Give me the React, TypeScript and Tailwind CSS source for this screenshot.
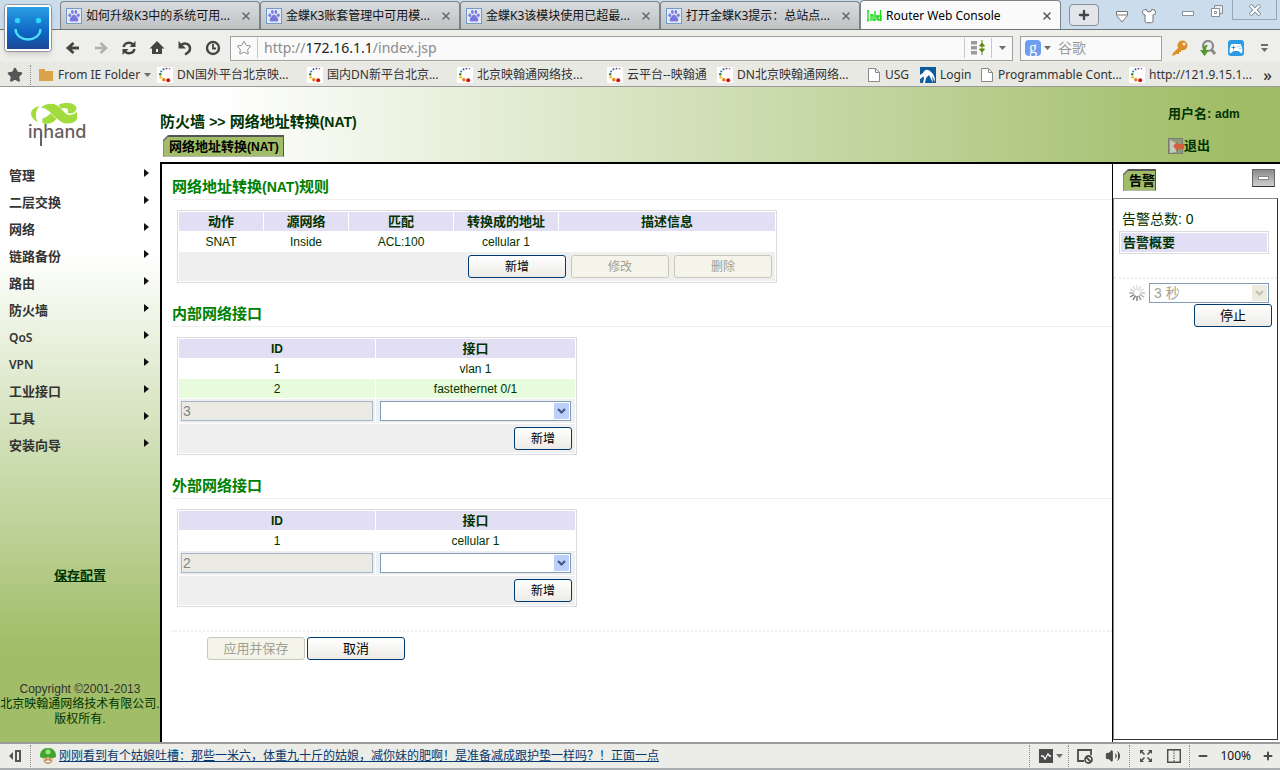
import React from 'react';
import { Star, X, Plus, Minus, Volume2, Shirt } from 'lucide-react';

const uiFont = 'font-["Noto_Sans","Noto_Sans_CJK_SC",sans-serif]';
const pageFont = 'font-["Liberation_Sans","Noto_Sans_CJK_SC",sans-serif]';

const tabs = [
  '如何升级K3中的系统可用...',
  '金蝶K3账套管理中可用模...',
  '金蝶K3该模块使用已超最...',
  '打开金蝶K3提示：总站点...',
];

const bookmarks = [
  { icon: 'dots', label: 'DN国外平台北京映...', width: 'w-[150px]' },
  { icon: 'dots', label: '国内DN新平台北京...', width: 'w-[150px]' },
  { icon: 'dots', label: '北京映翰通网络技...', width: 'w-[150px]' },
  { icon: 'dots', label: '云平台--映翰通', width: 'w-[110px]' },
  { icon: 'dots', label: 'DN北京映翰通网络...', width: 'w-[150px]' },
  { icon: 'doc', label: 'USG', width: 'w-[53px]' },
  { icon: 'login', label: 'Login', width: 'w-[60px]' },
  { icon: 'doc', label: 'Programmable Cont...', width: 'w-[149px]' },
  { icon: 'dots', label: 'http://121.9.15.1...', width: 'w-[128px]' },
];

const menuItems = ['管理', '二层交换', '网络', '链路备份', '路由', '防火墙', 'QoS', 'VPN', '工业接口', '工具', '安装向导'];

/* ---------- icons ---------- */

const PawIcon = () => (
  <svg className="h-4 w-4 shrink-0" viewBox="0 0 16 16">
    <rect x=".5" y=".5" width="15" height="15" fill="#e4eaf4" stroke="#6f9bcb" />
    <g fill="#7a78dd">
      <ellipse cx="3.8" cy="7.2" rx="1.4" ry="1.8" />
      <ellipse cx="6.3" cy="4" rx="1.3" ry="1.9" />
      <ellipse cx="9.8" cy="4" rx="1.3" ry="1.9" />
      <ellipse cx="12.3" cy="7.2" rx="1.4" ry="1.8" />
      <path d="M8 6.8c1.8 0 2.300 1.800 3.500 2.900 1.300 1.300.9 3.800-1 3.800-1 0-1.500-.3-2.500-.3s-1.500.3-2.500.3c-1.900 0-2.300-2.500-1-3.800C5.700 8.600 6.200 6.800 8 6.800z" />
    </g>
  </svg>
);

const DotsIcon = () => (
  <svg className="h-4 w-4 shrink-0 bg-white" viewBox="0 0 16 16">
    <circle cx="12.500" cy="1.800" r=".8" fill="#a05090" />
    <circle cx="9.500" cy="1.600" r=".9" fill="#5a3d8c" />
    <circle cx="6.500" cy="2.300" r="1" fill="#3b4c9a" />
    <circle cx="4.200" cy="4.500" r="1.100" fill="#3d7ec0" />
    <circle cx="3.200" cy="7.300" r="1.200" fill="#2f7d3a" />
    <circle cx="3.700" cy="10.300" r="1.400" fill="#f4c613" />
    <circle cx="6.800" cy="12.700" r="1.700" fill="#e07c12" />
    <circle cx="11.200" cy="13.300" r="2" fill="#cf1414" />
  </svg>
);

const DocIcon = () => (
  <svg className="h-4 w-[14px] shrink-0" viewBox="0 0 14 16">
    <path d="M1.500 1.500h7l4 4v9h-11z" fill="#fff" stroke="#8a8a8a" />
    <path d="M8.500 1.500v4h4" fill="none" stroke="#8a8a8a" />
  </svg>
);

const LoginIcon = () => (
  <svg className="h-4 w-4 shrink-0" viewBox="0 0 16 16">
    <rect width="16" height="16" fill="#0b5a9c" />
    <path d="M0 8l3-2C5 2 8 2 11 5c3 2 4 6 4 10l-3-6 1 7-4-8-3 3-1 5H0l3-6-3 2z" fill="#fff" />
    <path d="M0 16l3-7 1 2-1 5z" fill="#0b5a9c" />
  </svg>
);

const Caret = () => (
  <svg className="h-1 w-[7px] shrink-0" viewBox="0 0 7 4">
    <path d="M0 0h7L3.500 4z" fill="#6d6d6d" />
  </svg>
);

const FaceLogo = () => (
  <svg className="h-12 w-12" viewBox="0 0 48 48">
    <defs>
      <linearGradient id="face" x1="0" y1="0" x2="0" y2="1">
        <stop offset="0" stopColor="#2b9fe6" />
        <stop offset=".6" stopColor="#0d66c2" />
        <stop offset="1" stopColor="#1c4796" />
      </linearGradient>
    </defs>
    <rect x=".5" y=".5" width="47" height="47" rx="3" fill="#fff" stroke="#8e979e" />
    <rect x="3" y="3" width="42" height="42" fill="url(#face)" />
    <circle cx="13.500" cy="16.500" r="2.700" fill="#2fd6ff" />
    <circle cx="34.500" cy="16.500" r="2.700" fill="#2fd6ff" />
    <path d="M11.500 25c1 14 24 14 25 0" fill="none" stroke="#4fdcfa" strokeWidth="2.500" />
  </svg>
);

const InhandMark = () => (
  <svg className="ml-[3px] h-[21px] w-[46px]" viewBox="0 0 137 62">
    <g fill="#a2dc3c">
      <path d="M26 8C8 14 0 22 0 30c0 11 9 22 20 26-5-9-6-15-5-24 1-10 4-17 11-24z" />
      <path d="M30 14C42 0 66-2 80 8l24 24c8 7 22 4 33-6v22c-8 14-34 18-50 6L66 36C54 24 44 14 30 14z" />
      <path d="M82 6c14-10 50-10 54 10-4 14-18 18-28 12 4-4 4-10-3-12-7-3-12-1-15 1z" />
      <path d="M34 46c8-2 16-8 24-15l18 16c-10 14-28 18-42 12z" />
    </g>
  </svg>
);

const toolIcons: { name: string; shape: React.ReactNode }[] = [
  { name: 'Back', shape: <path d="M8.500 3L3 8l5.500 5M3.500 8H14" fill="none" stroke="#444" strokeWidth="2.800" /> },
  { name: 'Forward', shape: <path d="M7.500 3L13 8l-5.500 5M2 8h10.500" fill="none" stroke="#b0b0b0" strokeWidth="2.600" /> },
  {
    name: 'Reload',
    shape: (
      <g fill="none" stroke="#444" strokeWidth="2.400">
        <path d="M2.500 7C3.500 2 10 1.500 12.500 5M13.500 9c-1 5-7.500 5.500-10 2" />
        <path d="M14.500 1v6h-6zM1.500 15V9h6z" fill="#444" stroke="none" />
      </g>
    ),
  },
  {
    name: 'Home',
    shape: <path d="M8 1L.5 8.500H3V14h10V8.500h2.500zM7 9h2v3H7z" fill="#444" fillRule="evenodd" />,
  },
  {
    name: 'Undo',
    shape: (
      <g fill="none" stroke="#444" strokeWidth="2.500">
        <path d="M4 5c4-3 9-1 9 3.500 0 3-2 4.500-5 6" />
        <path d="M1.500 1v7.500H9z" fill="#444" stroke="none" />
      </g>
    ),
  },
  {
    name: 'History',
    shape: (
      <g fill="none" stroke="#444">
        <circle cx="8" cy="8" r="6" strokeWidth="2.400" />
        <path d="M8 4v4.500h3" strokeWidth="1.800" />
      </g>
    ),
  },
];

const Separator = () => <span className="h-[22px] border-l border-dotted border-[#8c8c8c]" />;

/* ---------- browser chrome ---------- */

function TabStrip() {
  return (
    <div className="flex h-[29px] bg-[#cbdcec] pl-[60px]">
      {tabs.map((t) => (
        <div
          key={t}
          className="mt-px flex w-[200px] items-center rounded-t-sm border border-b-0 border-[#7c8288] bg-linear-to-b from-[#d9dcde] to-[#bfc1c3] pt-px pr-[7px] pl-[5px]"
        >
          <PawIcon />
          <span className="ml-1 flex-1 whitespace-nowrap text-[#111]">{t}</span>
          <button aria-label="Close tab"><X className="h-3 w-3 text-[#666]" strokeWidth={3} /></button>
        </div>
      ))}
      <div className="flex w-[201px] items-center rounded-t-sm border border-b-0 border-[#7c8288] bg-[#fafafa] pt-px pr-[7px] pl-[5px]">
        <svg className="h-3 w-4" viewBox="0 0 16 12">
          <path d="M1 1h2M2 1v10M1 10.500h2M5 11V4M5 5h2v5h2M9 1v10M9 6h2v4M12 6h3v4h-3zM14.500 0v11" fill="none" stroke="#15dc15" strokeWidth="1.300" />
        </svg>
        <span className="ml-1 flex-1 whitespace-nowrap text-black">Router Web Console</span>
        <button aria-label="Close tab"><X className="h-3 w-3 text-[#555]" strokeWidth={3} /></button>
      </div>
      <button aria-label="New tab" className="mt-1 ml-2 flex h-[22px] w-[30px] items-center justify-center rounded-sm border border-[#8b9096] bg-[#e2e6ea]">
        <Plus className="h-[14px] w-[14px] text-[#444]" strokeWidth={4} />
      </button>
      <div className="ml-auto flex items-start">
        <svg className="mt-[11px] h-3 w-3" viewBox="0 0 12 12">
          <path d="M.5.5h11v4L6 11 .5 4.500zM1 4h10" fill="#fff" stroke="#777" />
        </svg>
        <Shirt className="mt-2 ml-[13px] h-4 w-4 fill-white text-[#777]" strokeWidth={1.5} />
        <button aria-label="Minimize" className="mt-[11px] ml-[25px] h-[5px] w-3 border border-[#8b949c] bg-white" />
        <svg className="mt-[5px] ml-[17px] h-3 w-3" viewBox="0 0 12 12">
          <path d="M3.500.5h8v8h-8z" fill="#e8eef4" stroke="#87909a" />
          <path d="M.5 3.500h8v8h-8zM3.500 6.500h2v2h-2z" fill="#fff" stroke="#87909a" />
        </svg>
        <button aria-label="Close window" className="mr-[3px] ml-[9px] flex h-5 w-[45px] items-center justify-center border border-t-0 border-[#97a5b8]">
          <svg className="h-3 w-3" viewBox="0 0 12 12">
            <path d="M1 1l10 10M11 1L1 11" stroke="#87909a" strokeWidth="4" />
            <path d="M1.500 1.500l9 9M10.500 1.500l-9 9" stroke="#fff" strokeWidth="2" />
          </svg>
        </button>
      </div>
    </div>
  );
}

function AddressBar() {
  return (
    <div className="flex h-[33px] items-center border-t border-[#6f7478] bg-[#eeeeeb] pt-1 pr-2 pl-[59px]">
      {toolIcons.map((icon) => (
        <button key={icon.name} aria-label={icon.name} className="flex w-7 shrink-0 justify-center">
          <svg className="h-4 w-4" viewBox="0 0 16 16">{icon.shape}</svg>
        </button>
      ))}
      <div className="ml-[3px] flex h-[25px] flex-1 items-center border border-[#a0a0a0] bg-[#fafafa]">
        <Star className="ml-[5px] h-4 w-4 text-[#8a8a8a]" strokeWidth={1.5} />
        <span className="ml-[5px] h-5 border-l border-[#c8c8c8]" />
        <div className="ml-[6px] flex-1 text-[14px] whitespace-nowrap text-[#8a8a8a]">
          http://<span className="text-[#222]">172.16.1.1</span>/index.jsp
        </div>
        <span className="h-5 border-l border-[#c8c8c8]" />
        <svg className="mx-[6px] h-4 w-[14px]" viewBox="0 0 14 16">
          <path d="M0 1h6v3.500H0zM0 6h6v3.500H0zM0 11h6v3.500H0z" fill="#9a9a9a" />
          <path d="M11 0v15M8.500 6h5L11 3zM8.500 9h5L11 12z" fill="#5c8a0c" stroke="#5c8a0c" />
        </svg>
        <span className="h-5 border-l border-[#c8c8c8]" />
        <button aria-label="Address history" className="flex w-5 justify-center"><Caret /></button>
      </div>
      <div className="ml-[7px] flex h-[25px] w-[142px] items-center border border-[#a0a0a0] bg-[#fafafa] px-1">
        <span className='flex h-4 w-4 items-center justify-center rounded-sm bg-[#6f9df0] font-["Liberation_Serif",serif] text-base leading-4 text-white'>g</span>
        <span className="mx-[3px]"><Caret /></span>
        <input aria-label="Search" placeholder="谷歌" className="ml-1 w-20 text-[14px] placeholder:text-[#9a9a9a]" />
      </div>
      <div className="ml-[10px] flex items-center gap-3">
        <svg className="h-4 w-4" viewBox="0 0 16 16">
          <path d="M1 13L8 6l3 3-2 1v2H7v2H4l-2 1.500H0z" fill="#d9902a" />
          <circle cx="10.500" cy="5.500" r="5" fill="#d9902a" />
          <circle cx="12" cy="4" r="1.500" fill="#eee" />
        </svg>
        <svg className="h-4 w-4" viewBox="0 0 16 16">
          <circle cx="8" cy="6" r="5" fill="none" stroke="#8a8a8a" strokeWidth="2.200" />
          <path d="M11 9l4 5" stroke="#8a8a8a" strokeWidth="3" />
          <path d="M8 5c-4 0-5 2-5 5H0l4.500 6L9 10H6c0-2 .5-3 2-5z" fill="#4d9a2c" />
        </svg>
        <svg className="h-4 w-4" viewBox="0 0 16 16">
          <rect width="16" height="16" rx="3" fill="#2b9ce4" />
          <path d="M4 4h8c2 0 3 8 2 9s-3-2-4-2H6c-1 0-3 3-4 2S2 4 4 4z" fill="#fff" />
          <path d="M3.500 7.500h4M5.500 5.500v4M9.500 6.500h1M11.500 8.500h1M11.500 6h1" stroke="#2b9ce4" />
        </svg>
        <span className="flex w-4 flex-col items-center gap-[2px]">
          <span className="w-[7px] border-t-2 border-[#6d6d6d]" />
          <Caret />
        </span>
      </div>
    </div>
  );
}

function BookmarkBar() {
  return (
    <div className="flex h-6 items-center bg-[#e9e9e4] pt-[2px] pl-[7px] whitespace-nowrap">
      <Star className="h-4 w-4 shrink-0 fill-[#555] text-[#555]" />
      <span className="mr-2 ml-[7px] h-5 border-l border-dotted border-[#8c8c8c]" />
      <svg className="h-3 w-[14px] shrink-0" viewBox="0 0 14 12">
        <path d="M0 0h6v2h8v10H0z" fill="#dba24a" />
      </svg>
      <a href="#folder" className="ml-[5px] flex w-[99px] shrink-0 items-center gap-1">
        From IE Folder
        <Caret />
      </a>
      {bookmarks.map((b) => (
        <a key={b.label} href="#bookmark" className={`flex shrink-0 items-center gap-1 ${b.width}`}>
          {b.icon === 'dots' && <DotsIcon />}
          {b.icon === 'doc' && <DocIcon />}
          {b.icon === 'login' && <LoginIcon />}
          {b.label}
        </a>
      ))}
      <button aria-label="More bookmarks" className="ml-auto pr-2 text-base leading-4 font-medium">»</button>
    </div>
  );
}

function StatusBar() {
  return (
    <footer className={`flex h-7 items-center border-t-2 border-b-2 border-t-[#9a9a9a] border-b-[#a9adb0] bg-[#ecece8] ${uiFont} text-xs`}>
      <svg className="ml-[9px] h-3 w-3 shrink-0" viewBox="0 0 12 12">
        <path d="M4 2v8L0 6z" fill="#555" />
        <path d="M7 1h4v10H7z" fill="none" stroke="#555" strokeWidth="2" />
      </svg>
      <span className="mr-[9px] ml-[9px] flex"><Separator /></span>
      <svg className="h-4 w-4 shrink-0" viewBox="0 0 16 16">
        <path d="M3 8h10v4c0 2-2 4-5 4s-5-2-5-4z" fill="#e8c089" />
        <path d="M5 12h6c0 2-1 3-3 3s-3-1-3-3z" fill="#fff" stroke="#8a4b22" strokeWidth=".7" />
        <path d="M0 8c0-5 3-8 8-8s8 3 8 8c0 1-1 2-3 2-3-1-7-1-10 0-2 0-3-1-3-2z" fill="#3fa52c" />
        <circle cx="8" cy="4" r="2.500" fill="#9fe07c" />
        <path d="M5.500 10h1M9.500 10h1" stroke="#333" />
      </svg>
      <a href="#news" className="ml-[3px] whitespace-nowrap text-[#063a6e] underline">
        刚刚看到有个姑娘吐槽：那些一米六，体重九十斤的姑娘，减你妹的肥啊！是准备减成跟护垫一样吗？！正面一点
      </a>
      <div className="ml-auto flex items-center pr-[6px] text-[#4c4c4c]">
        <Separator />
        <svg className="ml-2 h-4 w-4" viewBox="0 0 16 16">
          <rect x="1" y="1" width="14" height="14" fill="#4c4c4c" />
          <path d="M3 8h2l2 3 3-5 1.500 2H13" fill="none" stroke="#fff" strokeWidth="1.300" />
        </svg>
        <span className="mr-[5px] ml-[2px]"><Caret /></span>
        <Separator />
        <svg className="ml-2 h-4 w-4" viewBox="0 0 16 16">
          <path d="M7 13H1V2h13v5" fill="none" stroke="#4c4c4c" strokeWidth="1.800" />
          <circle cx="11.500" cy="11.500" r="3.500" fill="#ecece8" stroke="#4c4c4c" strokeWidth="1.800" />
          <path d="M9 9l5 5" stroke="#4c4c4c" strokeWidth="1.800" />
        </svg>
        <Volume2 className="ml-3 h-4 w-4 fill-[#4c4c4c]" strokeWidth={1.5} />
        <span className="ml-2 flex"><Separator /></span>
        <svg className="ml-[10px] h-3 w-3" viewBox="0 0 12 12">
          <path d="M0 0h4L0 4zM12 0v4L8 0zM0 12V8l4 4zM12 12H8l4-4z" fill="#4c4c4c" />
          <path d="M1 1l3.500 3.500M11 1L7.500 4.500M1 11l3.500-3.500M11 11L7.500 7.500" stroke="#4c4c4c" strokeWidth="1.500" />
        </svg>
        <svg className="ml-[15px] h-[14px] w-[14px]" viewBox="0 0 14 14">
          <path d="M.7.7h12.600v12.600H.7z" fill="none" stroke="#4c4c4c" strokeWidth="1.400" />
          <path d="M7 1v12" stroke="#4c4c4c" strokeDasharray="1.500 1" />
        </svg>
        <span className="ml-2 flex"><Separator /></span>
        <button aria-label="Zoom out" className="ml-[7px]"><Minus className="h-3 w-3" strokeWidth={4} /></button>
        <span className="mx-[11px] text-[#111]">100%</span>
        <button aria-label="Zoom in"><Plus className="h-3 w-3" strokeWidth={4} /></button>
      </div>
    </footer>
  );
}

/* ---------- router console ---------- */

function Button({ children, disabled, className = '' }: { children: React.ReactNode; disabled?: boolean; className?: string }) {
  const look = disabled
    ? 'border-[#c9c7ba] bg-[#f5f4ea] text-[#a1a192]'
    : 'border-[#003c74] bg-linear-to-b from-white to-[#ecebe6] text-black';
  return (
    <button disabled={disabled} className={`h-[23px] rounded-[3px] border leading-5 ${look} ${className}`}>
      {children}
    </button>
  );
}

function SelectBox({ label, option = '', disabled, className = '' }: { label: string; option?: string; disabled?: boolean; className?: string }) {
  return (
    <div className={`relative h-5 ${className}`}>
      <select
        aria-label={label}
        disabled={disabled}
        className={`h-full w-full appearance-none border border-[#7f9db9] bg-white pl-1 text-[14px] leading-[18px] opacity-100 ${disabled ? 'text-[#a1a192]' : ''}`}
      >
        <option>{option}</option>
      </select>
      <svg className="pointer-events-none absolute top-[2px] right-[2px] h-4 w-[15px]" viewBox="0 0 15 16">
        <rect width="15" height="16" rx="1" fill={disabled ? '#ecebe0' : '#bdd0fa'} />
        <path d="M4 6l3.500 3.500L11 6" fill="none" stroke={disabled ? '#c2c0b0' : '#43597f'} strokeWidth="2.200" />
      </svg>
    </div>
  );
}

function Section({ title, children }: { title: React.ReactNode; children: React.ReactNode }) {
  return (
    <section className="pb-2">
      <h2 className="mb-[10px] h-9 border-b border-[#eeeeee] pt-[13px] text-[15px] leading-5 font-bold text-[#008000]">
        {title}
      </h2>
      {children}
    </section>
  );
}

const tableClass = 'ml-[5px] table-fixed border-separate border-spacing-px border border-[#dcdcdc] text-center leading-[18px]';
const thClass = 'h-[19px] bg-[#e2dff5] p-0 font-bold text-[#003300]';

function NatRules() {
  return (
    <table className={`${tableClass} w-[600px]`}>
      <thead className="text-[13px]">
        <tr>
          <th className={`${thClass} w-[84px]`}>动作</th>
          <th className={`${thClass} w-[84px]`}>源网络</th>
          <th className={`${thClass} w-[104px]`}>匹配</th>
          <th className={`${thClass} w-[104px]`}>转换成的地址</th>
          <th className={thClass}>描述信息</th>
        </tr>
      </thead>
      <tbody>
        <tr>
          <td className="h-[19px] p-0">SNAT</td>
          <td className="p-0">Inside</td>
          <td className="p-0">ACL:100</td>
          <td className="p-0">cellular 1</td>
          <td className="p-0" />
        </tr>
        <tr>
          <td colSpan={5} className="h-[29px] bg-[#efefef] p-0">
            <div className="flex justify-end gap-[5px] pr-[3px]">
              <Button className="w-[98px]">新增</Button>
              <Button className="w-[98px]" disabled>修改</Button>
              <Button className="w-[98px]" disabled>删除</Button>
            </div>
          </td>
        </tr>
      </tbody>
    </table>
  );
}

function InterfaceTable({ rows, name }: { rows: string[]; name: string }) {
  const nextId = rows.length + 1;
  return (
    <table className={`${tableClass} w-[400px]`}>
      <thead>
        <tr>
          <th className={`${thClass} w-[196px]`}>ID</th>
          <th className={`${thClass} text-[13px]`}>接口</th>
        </tr>
      </thead>
      <tbody>
        {rows.map((row, i) => (
          <tr key={row} className={i % 2 ? 'bg-[#e8fbdc]' : 'bg-white'}>
            <td className="h-[19px] p-0">{i + 1}</td>
            <td className="p-0">{row}</td>
          </tr>
        ))}
        <tr className="bg-[#efefef]">
          <td className="h-6 p-0 px-[2px]">
            <input
              aria-label={`${name} ID`}
              disabled
              value={nextId}
              className="block h-5 w-full border border-[#a3b8cc] bg-[#ebebe4] pl-px text-[14px] text-[#848484]"
            />
          </td>
          <td className="p-0 px-1">
            <SelectBox label={`${name} 接口`} className="w-full" />
          </td>
        </tr>
        <tr className="bg-[#efefef]">
          <td colSpan={2} className="h-[29px] p-0 pr-[3px]">
            <div className="flex justify-end">
              <Button className="w-[58px]">新增</Button>
            </div>
          </td>
        </tr>
      </tbody>
    </table>
  );
}

function PanelTab({ children, className }: { children: React.ReactNode; className: string }) {
  return (
    <span className={`relative inline-block h-[22px] border border-t-2 border-[#555] border-b-[#b5b5b5] border-l-[#888] bg-[#a1bd67] pl-[5px] text-[13px] leading-5 font-bold whitespace-nowrap text-black ${className}`}>
      {children}
      <svg className="absolute -top-[2px] -left-px h-[6px] w-[6px]" viewBox="0 0 6 6">
        <path d="M0 0h6L0 6z" fill="#fff" />
        <path d="M0 6l6-6" stroke="#666" strokeWidth="1.500" />
      </svg>
    </span>
  );
}

function Sidebar() {
  return (
    <aside className="flex w-40 shrink-0 flex-col bg-linear-to-b from-white from-25% to-[#a1bd67] to-86%">
      <div className="h-[75px] pt-4 pl-7">
        <InhandMark />
        <div className="relative w-14 font-[Inter,sans-serif] text-[18px] leading-4 font-medium text-[#6a5f5c]">
          inhand
          <svg className="absolute top-2 left-[12px] h-[14px] w-[2px]" viewBox="0 0 2 14">
            <path d="M0 0h2v14H0z" fill="#6a5f5c" />
          </svg>
        </div>
      </div>
      <nav>
        {menuItems.map((item) => (
          <a key={item} href="#menu" className="flex h-[27px] items-center justify-between pr-[11px] pl-[9px] font-bold text-[#333]">
            {/^[A-Z]/.test(item) ? <span className={`${uiFont} font-semibold`}>{item}</span> : <span className="text-[13px]">{item}</span>}
            <svg className="mb-[6px] h-2 w-[5px]" viewBox="0 0 5 8">
              <path d="M0 0l5 4-5 4z" fill="#111" />
            </svg>
          </a>
        ))}
      </nav>
      <a href="#save" className="mt-[107px] text-center text-[13px] leading-5 font-bold text-[#003300] underline">保存配置</a>
      <div className="mt-auto pb-[15px] text-center leading-[15px] whitespace-nowrap">
        <p className="text-[#333]">Copyright ©2001-2013</p>
        <p>北京映翰通网络技术有限公司.</p>
        <p>版权所有.</p>
      </div>
    </aside>
  );
}

function AlarmPanel() {
  return (
    <aside className="flex w-[168px] shrink-0 flex-col border-l border-black pr-[2px] pb-[2px]">
      <div className="flex h-[34px] items-start justify-between pt-[5px] pr-[3px] pl-[10px]">
        <PanelTab className="pr-0">告警</PanelTab>
        <button aria-label="Collapse" className="flex h-[18px] w-[23px] items-center justify-center border border-[#666] border-b-[#333] bg-linear-to-b from-[#8a8a8a] to-[#cfcfcf]">
          <span className="h-1 w-[11px] border border-[#888] bg-white" />
        </button>
      </div>
      <div className="flex-1 border border-[#333] border-t-[#888] border-l-[#888]">
        <p className="mt-[10px] pl-2 text-[14px] leading-5">告警总数: 0</p>
        <div className="mt-[2px] mr-2 ml-[5px] border border-[#dcdcdc] p-px">
          <h3 className="bg-[#e2dff5] pl-[2px] text-[13px] leading-[19px] font-bold">告警概要</h3>
        </div>
        <div className="mt-[23px] border-t-2 border-dotted border-[#eeeeee] pt-1">
          <div className="flex items-center pr-2 pl-[15px]">
            <svg className="h-4 w-4" viewBox="0 0 16 16" stroke="#777" strokeWidth="1.400">
              <path d="M8 11v5" />
              <path d="M6.500 10.600L4 15M5.400 9.500L1 12" />
              <path d="M9.500 10.600L12 15" opacity=".8" />
              <path d="M10.600 9.500L15 12" opacity=".6" />
              <path d="M5 8H0" opacity=".6" />
              <path d="M11 8h5M5.400 6.500L1 4" opacity=".4" />
              <path d="M10.600 6.500L15 4M6.500 5.400L4 1M8 5V0M9.500 5.400L12 1" opacity=".25" />
            </svg>
            <SelectBox label="刷新间隔" option="3 秒" disabled className="ml-[4px] flex-1" />
          </div>
          <div className="mt-px flex justify-end pr-[5px]">
            <Button className="w-[78px] text-[13px]">停止</Button>
          </div>
        </div>
      </div>
    </aside>
  );
}

export default function App() {
  return (
    <div className="flex min-h-screen flex-col overflow-x-hidden">
      <div className={`relative border-b border-[#9a9a9a] ${uiFont} text-xs leading-4 text-[#333]`}>
        <TabStrip />
        <AddressBar />
        <BookmarkBar />
        <button aria-label="Browser menu" className="absolute top-1 left-1 rounded-sm shadow-md">
          <FaceLogo />
        </button>
      </div>

      <div className={`flex flex-1 ${pageFont} text-xs text-[#003300]`}>
        <Sidebar />
        <div className="flex min-w-0 flex-1 flex-col">
          <header className="flex h-[75px] justify-between bg-linear-to-r from-white from-5% to-[#a1bd67] to-95%">
            <div className="pt-[25px]">
              <h1 className="mb-[3px] text-[15px] leading-5 font-bold">
                防火墙 <span className="text-sm leading-5">&gt;&gt;</span> 网络地址转换<span className="text-sm leading-5">(NAT)</span>
              </h1>
              <div className="ml-[3px] flex">
                <PanelTab className="pr-1">网络地址转换<span className="text-xs leading-5">(NAT)</span></PanelTab>
              </div>
            </div>
            <div className="w-28 pt-[17px] text-[13px] leading-5 font-bold">
              <p>用户名: <span className="text-xs leading-5">adm</span></p>
              <a href="#logout" className="mt-3 flex items-center">
                <svg className="h-4 w-4" viewBox="0 0 16 16">
                  <rect x=".5" y=".5" width="14" height="15" fill="#8d9c78" stroke="#7c7c72" />
                  <path d="M2 2l6 3v9l-6 1z" fill="#c3ccb8" />
                  <path d="M5 8l5-5v3h6v5h-6v3z" fill="#d5603f" />
                </svg>
                退出
              </a>
            </div>
          </header>

          <div className="flex flex-1 border-t-2 border-l-2 border-black bg-white">
            <main className="min-w-0 flex-1 pl-[10px]">
              <Section title={<>网络地址转换<span className="text-sm leading-5">(NAT)</span>规则</>}>
                <NatRules />
              </Section>
              <Section title="内部网络接口">
                <InterfaceTable name="内部网络" rows={['vlan 1', 'fastethernet 0/1']} />
              </Section>
              <Section title="外部网络接口">
                <InterfaceTable name="外部网络" rows={['cellular 1']} />
              </Section>
              <div className="mt-[15px] flex gap-[2px] border-t-2 border-dotted border-[#eeeeee] pt-[5px] pl-[35px] text-[13px]">
                <Button className="w-[98px]" disabled>应用并保存</Button>
                <Button className="w-[98px]">取消</Button>
              </div>
            </main>
            <AlarmPanel />
          </div>
        </div>
      </div>

      <StatusBar />
    </div>
  );
}
